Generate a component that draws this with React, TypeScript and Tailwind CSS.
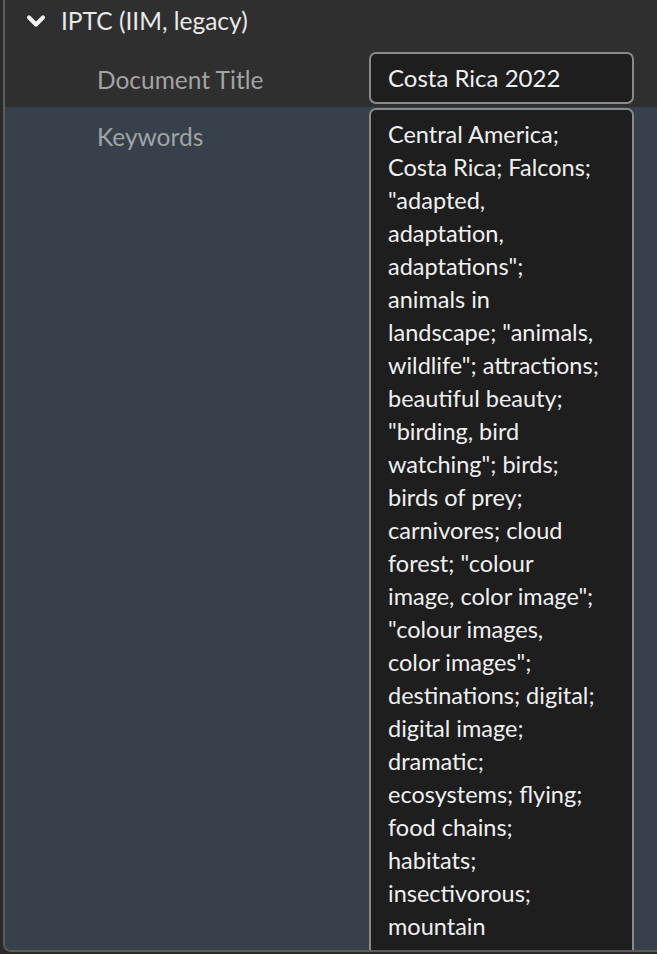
import { ChevronDown } from 'lucide-react';

const keywordLines = [
  'Central America;',
  'Costa Rica; Falcons;',
  '"adapted,',
  'adaptation,',
  'adaptations";',
  'animals in',
  'landscape; "animals,',
  'wildlife"; attractions;',
  'beautiful beauty;',
  '"birding, bird',
  'watching"; birds;',
  'birds of prey;',
  'carnivores; cloud',
  'forest; "colour',
  'image, color image";',
  '"colour images,',
  'color images";',
  'destinations; digital;',
  'digital image;',
  'dramatic;',
  'ecosystems; flying;',
  'food chains;',
  'habitats;',
  'insectivorous;',
  'mountain',
];

export default function App() {
  return (
    <div className="h-[954px] w-[657px] overflow-hidden bg-[#2a2a2a] font-['Lato','Noto_Sans',sans-serif]">
      <div className="ml-[3px] flex h-[952px] flex-col overflow-hidden rounded-bl-[8px] border-b-2 border-l-2 border-[#5c5c5c] bg-[#2f2f2f]">
        {/* section header */}
        <div className="flex h-[42px] shrink-0 items-center pl-[17px]">
          <ChevronDown size={28} strokeWidth={3.5} className="text-[#f2f2f2]" />
          <span className="ml-[11px] text-[24.5px] text-[#e8e8e8]">IPTC (IIM, legacy)</span>
        </div>

        {/* document title row */}
        <div className="flex h-[65px] shrink-0 items-start pt-[10px]">
          <div className="w-[364px] pl-[92px] pt-[10px] text-[24.5px] text-[#a3a3a3]">Document Title</div>
          <div className="flex h-[52px] w-[265px] items-center rounded-[7px] border-2 border-[#8a8a8a] bg-[#1e1e1e] pl-[17px] text-[24px] text-[#f0f0f0]">
            Costa Rica 2022
          </div>
        </div>

        {/* keywords row */}
        <div className="flex flex-1 items-start bg-[#36414c] pt-[1px]">
          <div className="w-[364px] pl-[92px] pt-[11px] text-[24.5px] text-[#a3a3a3]">Keywords</div>
          <div className="w-[265px] self-stretch rounded-t-[7px] border-x-2 border-t-2 border-[#8a8a8a] bg-[#1e1e1e] pl-[17px] pt-[8px] text-[23.5px] leading-[33px] text-[#f0f0f0]">
            {keywordLines.map((line, i) => (
              <div key={i} className="whitespace-nowrap">
                {line}
              </div>
            ))}
          </div>
        </div>
      </div>
    </div>
  );
}
